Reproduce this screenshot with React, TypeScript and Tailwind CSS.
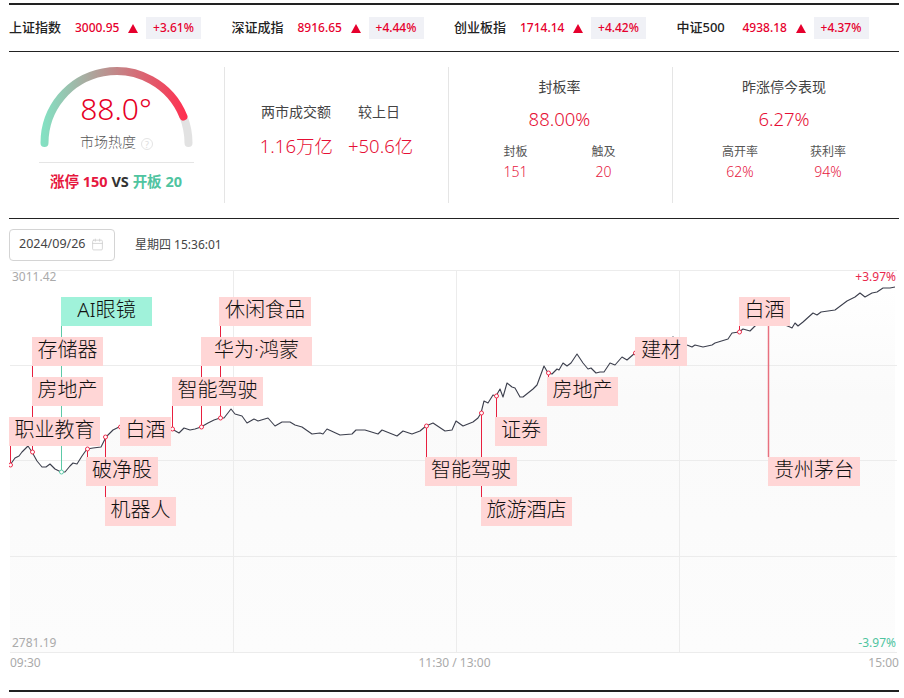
import { Calendar } from "lucide-react";

const indexes = [
  { name: "上证指数", value: "3000.95", pct: "+3.61%" },
  { name: "深证成指", value: "8916.65", pct: "+4.44%" },
  { name: "创业板指", value: "1714.14", pct: "+4.42%" },
  { name: "中证500", value: "4938.18", pct: "+4.37%" },
];

const linePoints =
  "10,465 15,458 19,456 22,452 28,446 32,452 37,461 42,467 46,467 50,464 55,469 61,472 65,472 70,466 73,463 77,464 82,456 87,449 93,448 101,447 106,437 113,430 119,427 126,432 140,428 155,431 172,429 179,433 184,428 190,430 195,429 201,427 208,423 214,420 220,418 224,418 231,409 235,414 242,416 247,423 254,419 258,421 268,418 275,426 282,422 290,422 295,425 302,427 312,434 320,433 323,434 327,429 340,435 352,434 356,430 365,430 378,434 382,430 397,436 403,431 412,434 420,431 426,426 433,423 445,431 452,430 456,421 463,426 473,422 478,418 481,413 484,401 488,403 493,395 496,396 500,389 503,397 507,383 512,387 515,388 520,397 523,397 533,389 537,385 544,366 548,373 552,374 557,369 559,370 563,363 567,366 571,363 577,354 583,363 588,369 591,368 596,373 600,372 604,372 610,363 615,365 622,357 627,360 635,353 645,349 660,346 673,337 680,342 687,345 692,347 695,345 703,347 712,345 715,343 728,339 732,333 739,332 743,329 750,331 755,326 762,322 775,318 785,325 790,327 792,328 795,323 798,326 803,322 813,313 817,315 821,312 835,310 847,301 855,297 860,293 865,297 872,293 877,292 883,288 890,288 895,287";

// dot is where the stem meets the line, the other end goes under the tag
const stems = [
  { x: 10.5, top: 445, bottom: 465, dot: 465 },
  { x: 32.5, top: 365, bottom: 452, dot: 452 },
  { x: 87.5, top: 449, bottom: 457, dot: 449 },
  { x: 105.5, top: 437, bottom: 497, dot: 437 },
  { x: 120.5, top: 427, bottom: 430, dot: 427 },
  { x: 172.5, top: 405, bottom: 429, dot: 429 },
  { x: 201.5, top: 365, bottom: 427, dot: 427 },
  { x: 220.5, top: 325, bottom: 418, dot: 418 },
  { x: 426.5, top: 426, bottom: 457, dot: 426 },
  { x: 481.5, top: 413, bottom: 497, dot: 413 },
  { x: 496.5, top: 396, bottom: 417, dot: 396 },
  { x: 548.5, top: 373, bottom: 377, dot: 373 },
  { x: 635.5, top: 353, bottom: 355, dot: 353 },
  { x: 739.5, top: 325, bottom: 332, dot: 332 },
];

const tags = [
  { text: "AI眼镜", cls: "left-[52px] top-[27px] w-[91px] bg-[#a0f2da]" },
  { text: "存储器", cls: "left-[23px] top-[67px] w-[71px] bg-[#ffd6d6]" },
  { text: "房地产", cls: "left-[23px] top-[107px] w-[71px] bg-[#ffd6d6]" },
  { text: "职业教育", cls: "left-0 top-[147px] w-[91px] bg-[#ffd6d6]" },
  { text: "白酒", cls: "left-[111px] top-[147px] w-[51px] bg-[#ffd6d6]" },
  { text: "破净股", cls: "left-[77px] top-[187px] w-[72px] bg-[#ffd6d6]" },
  { text: "机器人", cls: "left-[96px] top-[227px] w-[71px] bg-[#ffd6d6]" },
  { text: "休闲食品", cls: "left-[210px] top-[27px] w-[92px] bg-[#ffd6d6]" },
  { text: "华为·鸿蒙", cls: "left-[192px] top-[67px] w-[111px] bg-[#ffd6d6]" },
  { text: "智能驾驶", cls: "left-[163px] top-[107px] w-[91px] bg-[#ffd6d6]" },
  { text: "智能驾驶", cls: "left-[416px] top-[187px] w-[92px] bg-[#ffd6d6]" },
  { text: "旅游酒店", cls: "left-[472px] top-[227px] w-[91px] bg-[#ffd6d6]" },
  { text: "证券", cls: "left-[486px] top-[147px] w-[52px] bg-[#ffd6d6]" },
  { text: "房地产", cls: "left-[538px] top-[107px] w-[71px] bg-[#ffd6d6]" },
  { text: "建材", cls: "left-[626px] top-[67px] w-[52px] bg-[#ffd6d6]" },
  { text: "白酒", cls: "left-[730px] top-[27px] w-[51px] bg-[#ffd6d6]" },
  { text: "贵州茅台", cls: "left-[759px] top-[187px] w-[92px] bg-[#ffd6d6]" },
];

const Gauge = () => (
  <svg width="160" height="81" viewBox="36 67 160 81" className="block">
    <defs>
      <linearGradient id="heat" gradientUnits="userSpaceOnUse" x1="44" y1="0" x2="186" y2="0">
        <stop offset="0" stopColor="#84e0c2" />
        <stop offset="1" stopColor="#ff3050" />
      </linearGradient>
    </defs>
    <path d="M188.5 143 A72 72 0 0 0 183.4 116.5" fill="none" stroke="#e2e2e2" strokeWidth="8" strokeLinecap="round" />
    <path d="M44.5 143 A72 72 0 0 1 183.4 116.5" fill="none" stroke="url(#heat)" strokeWidth="8" strokeLinecap="round" />
  </svg>
);

const SplitStat = ({ title, value, a, b }: { title: string; value: string; a: string[]; b: string[] }) => (
  <div className="flex flex-col items-center pt-[11px]">
    <div className="text-[14px] leading-[18px] text-[#444]">{title}</div>
    <div className="mt-[11px] text-[18.5px] leading-[24px] font-light text-[#e60f35]">{value}</div>
    <div className="mt-[13px] grid w-[176px] grid-cols-2 text-center">
      <div>
        <div className="text-[12px] leading-[16px] text-[#555]">{a[0]}</div>
        <div className="mt-[2px] text-[14px] leading-[20px] font-light text-[#e6173e]">{a[1]}</div>
      </div>
      <div>
        <div className="text-[12px] leading-[16px] text-[#555]">{b[0]}</div>
        <div className="mt-[2px] text-[14px] leading-[20px] font-light text-[#e6173e]">{b[1]}</div>
      </div>
    </div>
  </div>
);

export default function App() {
  return (
    <div className="ml-[9px] w-[890px] bg-white pt-[3px] font-['Noto_Sans','Noto_Sans_CJK_SC',sans-serif]">
      <div className="grid h-[49px] grid-cols-4 items-center border-t-2 border-b border-t-[#222] border-b-[#222]">
        {indexes.map((item) => (
          <div key={item.name} className="flex items-center">
            <span className="w-[66px] text-[13px] font-medium text-[#222]">{item.name}</span>
            <span className="w-[53px] text-[12px] font-medium text-[#e6002d]">{item.value}</span>
            <span className="h-0 w-0 border-x-[5px] border-b-[9px] border-x-transparent border-b-[#e6002d]" />
            <span className="ml-[8px] flex h-[22px] w-[55px] items-center justify-center bg-[#f0f1f6] text-[12px] font-medium text-[#e6002d]">
              {item.pct}
            </span>
          </div>
        ))}
      </div>

      <div className="grid h-[167px] grid-cols-[216px_224px_224px_1fr] border-b border-b-[#222] py-[15px]">
        <div className="relative flex flex-col items-center border-r border-r-[#e5e5e5] pr-[1px]">
          <Gauge />
          <div className="absolute top-[17px] left-0 w-[214px] text-center text-[30px] leading-[50px] font-light text-[#e60026]">
            88.0°
          </div>
          <div className="absolute top-[65px] left-[71px] text-[14px] leading-[20px] font-light text-[#555]">市场热度</div>
          <span className="absolute top-[71px] left-[132px] flex h-[12px] w-[12px] items-center justify-center rounded-full border border-[#e4e4e4] text-[9px] leading-none text-[#ddd]">
            ?
          </span>
          <div className="mt-[14px] w-[155px] border-t border-t-[#e5e5e5] pt-[8px] text-center text-[14.5px] leading-[20px] font-bold whitespace-nowrap">
            <span className="text-[#e6173e]">涨停 150</span>
            <span className="text-[#333]"> VS </span>
            <span className="text-[#4fc4a0]">开板 20</span>
          </div>
        </div>

        <div className="flex flex-col items-center border-r border-r-[#e5e5e5] pt-[36px]">
          <div className="flex gap-[27px] pr-[12px] text-[14px] leading-[18px] text-[#444]">
            <span>两市成交额</span>
            <span>较上日</span>
          </div>
          <div className="mt-[13px] flex gap-[15px] text-[18.5px] leading-[24px] font-light text-[#e60f35]">
            <span>1.16万亿</span>
            <span>+50.6亿</span>
          </div>
        </div>

        <div className="border-r border-r-[#e5e5e5] pr-[2px]">
          <SplitStat title="封板率" value="88.00%" a={["封板", "151"]} b={["触及", "20"]} />
        </div>
        <div className="pr-[4px]">
          <SplitStat title="昨涨停今表现" value="6.27%" a={["高开率", "62%"]} b={["获利率", "94%"]} />
        </div>
      </div>

      <div className="flex h-[51px] items-center gap-[20px]">
        <div className="flex h-[32px] w-[106px] items-center gap-[5px] rounded border border-[#d4d4d4] pl-[9px]">
          <span className="text-[12.5px] text-[#444]">2024/09/26</span>
          <Calendar size={13} strokeWidth={1.5} className="text-[#ccc]" />
        </div>
        <span className="text-[12px] text-[#444]">星期四 15:36:01</span>
      </div>

      <div className="relative h-[383px]">
        <svg width="890" height="383" viewBox="9 270 890 383" className="absolute top-0 left-0">
          <defs>
            <linearGradient id="area" x1="0" y1="0" x2="0" y2="1">
              <stop offset="0" stopColor="#ffffff" />
              <stop offset="0.3" stopColor="#fafafa" />
              <stop offset="1" stopColor="#fcfcfc" />
            </linearGradient>
          </defs>
          <polygon points={`10,652 ${linePoints} 895,652`} fill="url(#area)" />
          {[270.5, 365.5, 460.5, 556.5, 652.5].map((y) => (
            <line key={y} x1="10" x2="897" y1={y} y2={y} stroke="#ececec" />
          ))}
          {[233.5, 456.5, 679.5].map((x) => (
            <line key={x} x1={x} x2={x} y1="270" y2="652" stroke="#ececec" />
          ))}
          <polyline points={linePoints} fill="none" stroke="#3c3f4d" strokeWidth="1.1" strokeLinejoin="round" />
          <line x1="61.5" x2="61.5" y1="326" y2="472" stroke="#5cc9a7" />
          <circle cx="61.5" cy="472" r="2" fill="#fff" stroke="#5cc9a7" />
          <line x1="768.5" x2="768.5" y1="325" y2="457" stroke="#e8707f" strokeWidth="1.5" />
          {stems.map((s) => (
            <g key={s.x}>
              <line x1={s.x} x2={s.x} y1={s.top} y2={s.bottom} stroke="#e8203f" />
              <circle cx={s.x} cy={s.dot} r="2" fill="#fff" stroke="#ee2b4b" />
            </g>
          ))}
        </svg>

        {tags.map((tag) => (
          <div
            key={tag.cls}
            className={`absolute flex h-[29px] items-center justify-center pb-[4px] text-[20px] leading-none font-light text-[#111] ${tag.cls}`}
          >
            {tag.text}
          </div>
        ))}

        <span className="absolute top-0 left-[3px] text-[12px] leading-[14px] text-[#aaa]">3011.42</span>
        <span className="absolute top-0 right-[3px] text-[12px] leading-[14px] text-[#e8294c]">+3.97%</span>
        <span className="absolute bottom-[3px] left-[3px] text-[12px] leading-[14px] text-[#aaa]">2781.19</span>
        <span className="absolute right-[3px] bottom-[3px] text-[12px] leading-[14px] text-[#4fc4a0]">-3.97%</span>
      </div>

      <div className="flex h-[39px] justify-between border-b-2 border-b-[#222] pt-[2px] text-[12px] leading-[16px] text-[#aaa]">
        <span className="pl-[1px]">09:30</span>
        <span>11:30 / 13:00</span>
        <span>15:00</span>
      </div>
    </div>
  );
}
